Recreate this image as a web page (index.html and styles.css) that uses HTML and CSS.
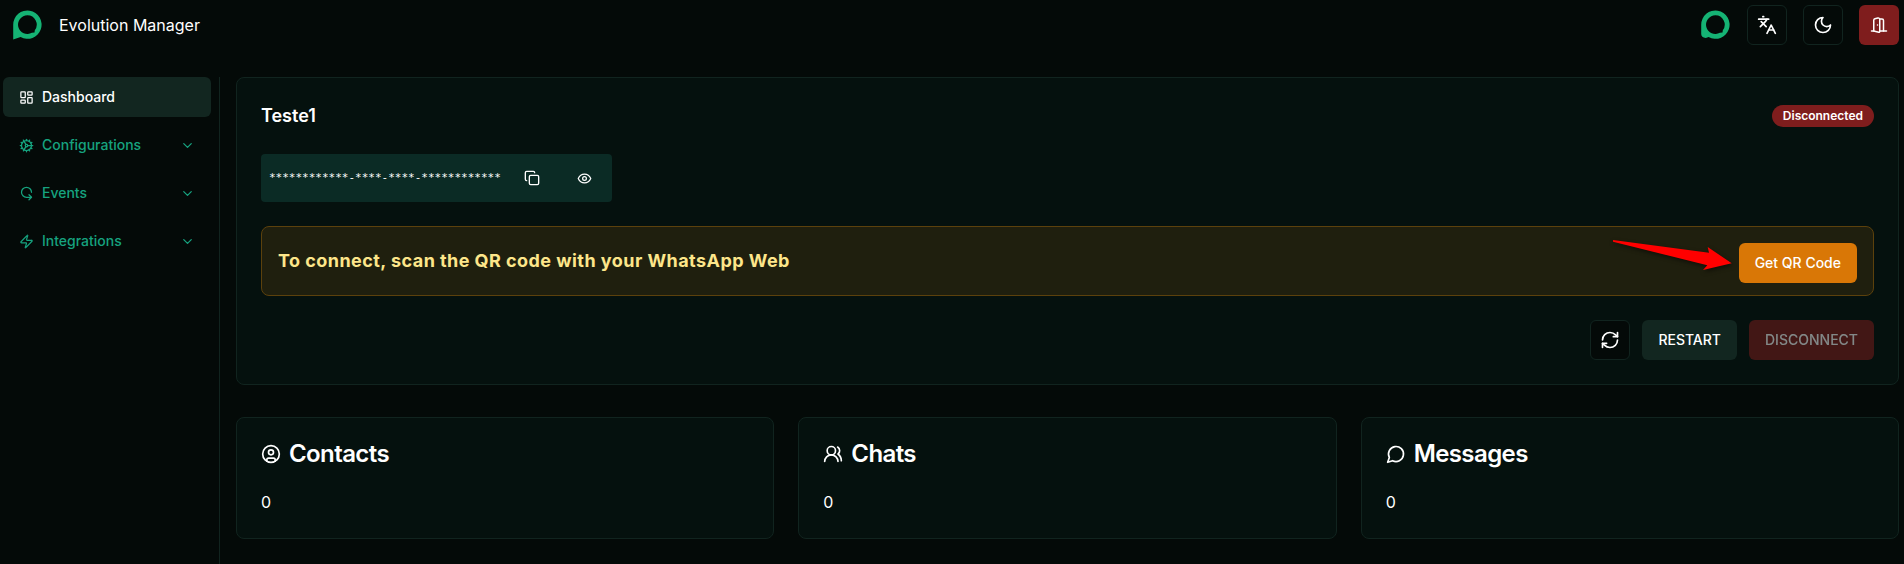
FILE: index.html
```html
<!DOCTYPE html>
<html lang="en">
<head>
    <meta charset="UTF-8">
    <meta name="viewport" content="width=device-width, initial-scale=1.0">
    <title>Evolution Manager</title>
    <link rel="stylesheet" href="styles.css">
</head>
<body>
    <header class="header">
        <a class="brand">
            <svg class="logo" viewBox="0 0 30 30"><path d="M1.2 29.6V14.6A14.2 14.2 0 1 1 8.6 27.1ZM15.4 5.3a9.3 9.3 0 1 0 4.5 17.4l2.6-.2.3-2.3A9.3 9.3 0 0 0 15.4 5.3Z" fill-rule="evenodd"/></svg>
            <span>Evolution Manager</span>
        </a>
        <div class="header-actions">
            <svg class="logo" viewBox="0 0 30 30"><path d="M1.2 24V14.6A14.2 14.2 0 1 1 8.6 27.1L5.8 28Q1.2 27.5 1.2 24ZM15.4 5.3a9.3 9.3 0 1 0 4.5 17.4l2.6-.2.3-2.3A9.3 9.3 0 0 0 15.4 5.3Z" fill-rule="evenodd"/></svg>
            <button class="btn btn-icon">
                <svg class="icon icon-20" viewBox="0 0 24 24"><path d="m5 8 6 6"/><path d="m4 14 6-6 2-3"/><path d="M2 5h12"/><path d="M7 2h1"/><path d="m22 22-5-10-5 10"/><path d="M14 18h6"/></svg>
            </button>
            <button class="btn btn-icon">
                <svg class="icon icon-20" viewBox="0 0 24 24"><path d="M12 3a6 6 0 0 0 9 9 9 9 0 1 1-9-9Z"/></svg>
            </button>
            <button class="btn btn-icon btn-danger">
                <svg class="icon icon-18" viewBox="0 0 24 24"><path d="M13 4h3a2 2 0 0 1 2 2v14"/><path d="M2 20h3"/><path d="M13 20h9"/><path d="M10 12v.01"/><path d="M13 4.562v16.157a1 1 0 0 1-1.242.97L5 20V5.562a2 2 0 0 1 1.515-1.94l4-1A2 2 0 0 1 13 4.561Z"/></svg>
            </button>
        </div>
    </header>

    <div class="layout">
        <nav class="sidebar">
            <a class="nav-item active">
                <svg class="icon icon-15" viewBox="0 0 24 24"><rect width="7" height="9" x="3" y="3" rx="1"/><rect width="7" height="5" x="14" y="3" rx="1"/><rect width="7" height="9" x="14" y="12" rx="1"/><rect width="7" height="5" x="3" y="16" rx="1"/></svg>
                <span>Dashboard</span>
            </a>
            <a class="nav-item">
                <svg class="icon icon-15" viewBox="0 0 24 24"><path d="M12 20a8 8 0 1 0 0-16 8 8 0 0 0 0 16Z"/><path d="M12 14a2 2 0 1 0 0-4 2 2 0 0 0 0 4Z"/><path d="M12 2v2"/><path d="M12 22v-2"/><path d="m17 20.66-1-1.73"/><path d="M11 10.27 7 3.34"/><path d="m20.66 17-1.73-1"/><path d="m3.34 7 1.73 1"/><path d="M14 12h8"/><path d="M2 12h2"/><path d="m20.66 7-1.73 1"/><path d="m3.34 17 1.73-1"/><path d="m17 3.34-1 1.73"/><path d="m11 13.73-4 6.93"/></svg>
                <span>Configurations</span>
                <svg class="icon icon-15 chevron" viewBox="0 0 24 24"><path d="m6 9 6 6 6-6"/></svg>
            </a>
            <a class="nav-item">
                <svg class="icon icon-15" viewBox="0 0 24 24"><path d="M20 10c0-4.4-3.6-8-8-8s-8 3.6-8 8 3.6 8 8 8h8"/><path d="m16 14 4 4-4 4"/></svg>
                <span>Events</span>
                <svg class="icon icon-15 chevron" viewBox="0 0 24 24"><path d="m6 9 6 6 6-6"/></svg>
            </a>
            <a class="nav-item">
                <svg class="icon icon-15" viewBox="0 0 24 24"><path d="M4 14a1 1 0 0 1-.78-1.63l9.9-10.2a.5.5 0 0 1 .86.46l-1.92 6.02A1 1 0 0 0 13 10h7a1 1 0 0 1 .78 1.63l-9.9 10.2a.5.5 0 0 1-.86-.46l1.92-6.02A1 1 0 0 0 11 14z"/></svg>
                <span>Integrations</span>
                <svg class="icon icon-15 chevron" viewBox="0 0 24 24"><path d="m6 9 6 6 6-6"/></svg>
            </a>
        </nav>

        <main class="content">
            <section class="card instance">
                <div class="instance-header">
                    <h2>Teste1</h2>
                    <span class="badge">Disconnected</span>
                </div>
                <div class="token">
                    <code>************-****-****-************</code>
                    <button class="btn btn-ghost">
                        <svg class="icon icon-16" viewBox="0 0 24 24"><rect width="14" height="14" x="8" y="8" rx="2"/><path d="M4 16c-1.1 0-2-.9-2-2V4c0-1.1.9-2 2-2h10c1.1 0 2 .9 2 2"/></svg>
                    </button>
                    <button class="btn btn-ghost">
                        <svg class="icon icon-15" viewBox="0 0 24 24"><path d="M2 12s3-7 10-7 10 7 10 7-3 7-10 7-10-7-10-7Z"/><circle cx="12" cy="12" r="3"/></svg>
                    </button>
                </div>
                <div class="alert">
                    <h3>To connect, scan the QR code with your WhatsApp Web</h3>
                    <button class="btn btn-warning">Get QR Code</button>
                    <svg class="arrow" viewBox="0 0 120 32"><path d="M0 1 96 13.7 94.7 8 118.7 24.3 90 31 94.3 26.3 0 2.7Z"/></svg>
                </div>
                <div class="instance-footer">
                    <button class="btn btn-icon">
                        <svg class="icon icon-20" viewBox="0 0 24 24"><path d="M3 12a9 9 0 0 1 9-9 9.75 9.75 0 0 1 6.74 2.74L21 8"/><path d="M21 3v5h-5"/><path d="M21 12a9 9 0 0 1-9 9 9.75 9.75 0 0 1-6.74-2.74L3 16"/><path d="M8 16H3v5"/></svg>
                    </button>
                    <button class="btn btn-secondary">RESTART</button>
                    <button class="btn btn-danger" disabled>DISCONNECT</button>
                </div>
            </section>

            <section class="stats">
                <div class="card stat">
                    <h3>
                        <svg class="icon icon-20" viewBox="0 0 24 24"><circle cx="12" cy="12" r="10"/><circle cx="12" cy="10" r="3"/><path d="M7 20.662V19a2 2 0 0 1 2-2h6a2 2 0 0 1 2 2v1.662"/></svg>
                        Contacts
                    </h3>
                    <p>0</p>
                </div>
                <div class="card stat">
                    <h3>
                        <svg class="icon icon-20" viewBox="0 0 24 24"><path d="M18 21a8 8 0 0 0-16 0"/><circle cx="10" cy="8" r="5"/><path d="M22 20c0-3.37-2-6.5-4-8a5 5 0 0 0-.45-8.3"/></svg>
                        Chats
                    </h3>
                    <p>0</p>
                </div>
                <div class="card stat">
                    <h3>
                        <svg class="icon icon-20" viewBox="0 0 24 24"><path d="M7.9 20A9 9 0 1 0 4 16.1L2 22Z"/></svg>
                        Messages
                    </h3>
                    <p>0</p>
                </div>
            </section>
        </main>
    </div>
</body>
</html>
```
FILE: styles.css
```css
* {
    box-sizing: border-box;
}
body {
    font-family: Inter, sans-serif;
    font-size: 16px;
    line-height: 24px;
    background-color: #040a08;
    color: #fff;
    margin: 0;
    height: 564px;
    display: flex;
    flex-direction: column;
    overflow: hidden;
}
h2, h3, p {
    margin: 0;
}
.header {
    display: flex;
    align-items: center;
    justify-content: space-between;
    height: 50px;
    padding: 0 5px 0 12px;
}
.brand {
    display: flex;
    align-items: center;
    gap: 17px;
}
.logo {
    width: 30px;
    height: 30px;
    fill: #15b374;
}
.header-actions {
    display: flex;
    align-items: center;
    gap: 16px;
}
.header-actions .logo {
    margin-right: 1px;
}
.icon {
    flex-shrink: 0;
    fill: none;
    stroke: currentColor;
    stroke-width: 2;
    stroke-linecap: round;
    stroke-linejoin: round;
}
.icon-15 {
    width: 15px;
    height: 15px;
}
.icon-16 {
    width: 16px;
    height: 16px;
}
.icon-18 {
    width: 18px;
    height: 18px;
}
.icon-20 {
    width: 20px;
    height: 20px;
}
.btn {
    display: inline-flex;
    align-items: center;
    justify-content: center;
    height: 40px;
    padding: 0 16px;
    border: none;
    border-radius: 6px;
    font-family: inherit;
    font-size: 14px;
    font-weight: 500;
    line-height: 20px;
    color: #fff;
    background: none;
    cursor: pointer;
}
.btn-icon {
    width: 40px;
    padding: 0;
    border: 1px solid #11241f;
    background-color: #040a08;
}
.btn-ghost {
    width: 40px;
    padding: 0;
}
.btn-secondary {
    background-color: #122620;
}
.btn-warning {
    background-color: #d97706;
}
.btn-danger {
    border: none;
    background-color: #7f1d1d;
}
.btn:disabled {
    opacity: 0.5;
}
.layout {
    display: flex;
    flex: 1;
    margin-top: 27px;
}
.sidebar {
    display: flex;
    flex-direction: column;
    gap: 8px;
    width: 220px;
    padding: 0 8px 0 3px;
    border-right: 1px solid #11241f;
}
.nav-item {
    display: flex;
    align-items: center;
    gap: 8px;
    height: 40px;
    padding: 0 16px;
    border-radius: 6px;
    font-size: 14px;
    font-weight: 500;
    color: #16a37f;
}
.nav-item.active {
    background-color: #122620;
    color: #fff;
}
.chevron {
    margin-left: auto;
}
.content {
    flex: 1;
    padding: 0 5px 0 16px;
}
.card {
    border: 1px solid #11241f;
    border-radius: 8px;
    background-color: #05110e;
}
.instance {
    height: 308px;
    padding: 24px;
}
.instance-header {
    display: flex;
    align-items: center;
    justify-content: space-between;
    height: 28px;
}
.instance-header h2 {
    font-size: 18px;
    font-weight: 600;
}
.badge {
    padding: 2px 10px;
    border: 1px solid transparent;
    border-radius: 11px;
    font-size: 12px;
    font-weight: 600;
    line-height: 16px;
    background-color: #7f1d1d;
}
.token {
    display: flex;
    align-items: center;
    gap: 12px;
    width: fit-content;
    height: 48px;
    margin-top: 24px;
    padding: 0 8px;
    border-radius: 4px;
    background-color: #0b2b25;
}
.token code {
    width: 231px;
    font-family: "DejaVu Sans Mono", monospace;
    font-size: 11px;
    white-space: nowrap;
}
.alert {
    position: relative;
    display: flex;
    justify-content: space-between;
    height: 70px;
    margin-top: 24px;
    padding: 16px;
    border: 1px solid #5c410c;
    border-radius: 8px;
    background-color: #1f1f0e;
}
.alert h3 {
    margin-top: 5px;
    font-size: 18px;
    font-weight: 700;
    line-height: 25px;
    letter-spacing: 0.025em;
    color: #fde68a;
}
/* pointer drawn over the alert, aimed at the QR button */
.arrow {
    position: absolute;
    right: 140px;
    top: 12px;
    width: 120px;
    height: 32px;
    overflow: visible;
    fill: #f00;
    filter: drop-shadow(1px 2px 2px rgba(0, 0, 0, 0.5));
}
.instance-footer {
    display: flex;
    justify-content: flex-end;
    gap: 12px;
    margin-top: 24px;
}
.stats {
    display: grid;
    grid-template-columns: repeat(3, 1fr);
    gap: 24px;
    margin-top: 32px;
}
.stat {
    height: 122px;
    padding: 24px;
}
.stat h3 {
    display: flex;
    align-items: center;
    gap: 8px;
    font-size: 24px;
    font-weight: 600;
    line-height: 24px;
    letter-spacing: -0.6px;
}
.stat p {
    margin-top: 24px;
}
```
